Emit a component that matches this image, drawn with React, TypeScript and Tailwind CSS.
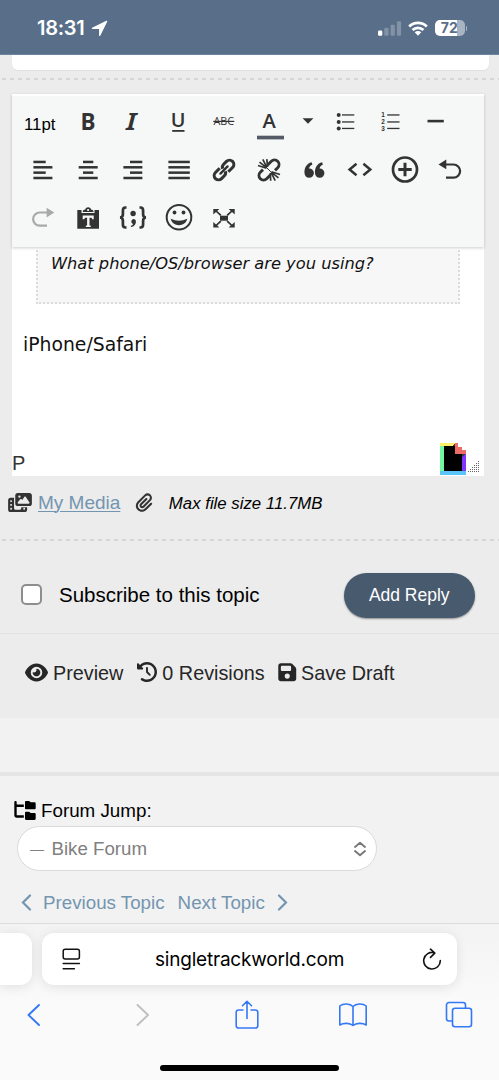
import type { ReactNode } from "react";
import { FaEye, FaFolderTree, FaPaperclip, FaPhotoFilm, FaFloppyDisk, FaClockRotateLeft } from "react-icons/fa6";

// Every toolbar glyph is drawn around 0,0 in a 40x40 box.
function Tool({ children, className = "w-[45.3px]" }: { children: ReactNode; className?: string }) {
    return (
        <button className={`flex h-12 shrink-0 items-center justify-center ${className}`}>
            <svg className="h-10 w-10 shrink-0 overflow-visible" viewBox="-20 -20 40 40" fill="#333" fontFamily="'Open Sans', 'Noto Sans', sans-serif">
                {children}
            </svg>
        </button>
    );
}

function AlignLines({ rows }: { rows: [number, number][] }) {
    return (
        <>
            {rows.map(([x, width], i) => (
                <rect key={i} x={x} y={-9.3 + i * 5.35} width={width} height="2.5" />
            ))}
        </>
    );
}

function Dashes() {
    return <div className="h-[2px] bg-[repeating-linear-gradient(90deg,transparent_0,transparent_2px,#d6d6d6_2px,#d6d6d6_6px,transparent_6px,transparent_8px)]" />;
}

function StatusBar() {
    return (
        <header className="flex h-[55px] shrink-0 items-center border-b border-[#6c86a1] bg-[#596f89] pl-[37px] pr-[32px] pt-[2px] text-white">
            <span className="w-[49px] font-[Inter,sans-serif] text-[20px] font-semibold leading-none tracking-[-0.3px]">18:31</span>
            <svg className="ml-[5px] size-[17px]" viewBox="0 0 17 17" fill="#fff" stroke="#fff" strokeWidth="1.2" strokeLinejoin="round">
                <path d="M15.6 1.4L1.400 8.300H8.700V15.500z" />
            </svg>
            <svg className="ml-auto h-[15px] w-[24px]" viewBox="0 0 24 15" fill="#fff">
                <rect x="0" y="9.5" width="4.3" height="5.3" rx="1.2" />
                <rect x="6.3" y="6.7" width="4.2" height="8.1" rx="1.2" opacity=".25" />
                <rect x="12.6" y="3.7" width="4.2" height="11.1" rx="1.2" opacity=".25" />
                <rect x="18.9" y=".3" width="4.2" height="14.5" rx="1.2" opacity=".25" />
            </svg>
            <svg className="ml-[6px] h-[15px] w-[20px]" viewBox="0 0 20 15" fill="none" stroke="#fff" strokeWidth="2.8">
                <path d="M1.2 5.4a12.6 12.6 0 0 1 17.6 0" />
                <path d="M4.6 9a7.7 7.7 0 0 1 10.8 0" />
                <path d="M6.7 11.3a4.7 4.7 0 0 1 6.6 0L10 14.7z" fill="#fff" stroke="none" />
            </svg>
            <div className="ml-[7px] flex h-[16px] w-[29.5px] items-center justify-center rounded-[5px] bg-[linear-gradient(90deg,#fff_72%,#a9b4c2_72%)] pr-[1px] font-[Inter,sans-serif] text-[14px] font-bold leading-none text-[#596f89]">
                72
            </div>
            <div className="ml-[1px] h-[5px] w-[1.5px] rounded-r-full bg-[#a9b4c2]" />
        </header>
    );
}

function Toolbar() {
    return (
        <div className="h-[153px] border-t-2 border-white bg-[#f6f8f7] pl-[8px] pt-[2px] shadow-[0_1px_3px_rgba(0,0,0,0.2)]">
            <div className="flex">
                <button className="flex h-12 w-[45.3px] shrink-0 items-center pl-[4px] pt-[6px] text-[16.8px] text-black">11pt</button>
                <Tool>
                    <text x="-7.400" y="8.3" fontSize="24" fontWeight="700" textLength="15" lengthAdjust="spacingAndGlyphs">B</text>
                </Tool>
                <Tool>
                    <text x="-7" y="8.3" fontFamily="Noto Sans" fontSize="24" fontWeight="600" fontStyle="italic" textLength="10.5" lengthAdjust="spacingAndGlyphs">I</text>
                </Tool>
                <Tool>
                    <text x="-8.2" y="5.4" fontSize="19.5" fontWeight="600" textLength="14.7" lengthAdjust="spacingAndGlyphs">U</text>
                    <rect x="-6.8" y="8" width="12.3" height="1.8" />
                </Tool>
                <Tool>
                    <text x="-10.5" y="3" fontSize="11" textLength="20.5" lengthAdjust="spacingAndGlyphs">ABC</text>
                    <rect x="-10.7" y="-1.2" width="21" height="1.2" />
                </Tool>
                <Tool>
                    <text x="-6.6" y="5.7" fontSize="20" fontWeight="600" textLength="13.3" lengthAdjust="spacingAndGlyphs">A</text>
                    <rect x="-12" y="13.700" width="27" height="3.700" fill="#555b66" />
                </Tool>
                <Tool className="w-[31.5px]">
                    <path d="M-5.4-3.7H5.4L0 1.7z" />
                </Tool>
                <Tool>
                    {[-7, 0, 6.5].map((y) => (
                        <g key={y}>
                            <circle cx="-7.3" cy={y - 0.1} r="2" />
                            <rect x="-4" y={y - 0.7} width="12.3" height="1.3" />
                        </g>
                    ))}
                </Tool>
                <Tool>
                    {[-7, 0, 6.5].map((y, i) => (
                        <g key={y}>
                            <text x="-9.800" y={y + 2} fontSize="6.400" fontWeight="700" fontFamily="Liberation Sans">{i + 1}</text>
                            <rect x="-3.8" y={y - 0.7} width="12.3" height="1.3" />
                        </g>
                    ))}
                </Tool>
                <Tool>
                    <rect x="-9.5" y="-2.2" width="16.3" height="2.6" />
                </Tool>
            </div>
            <div className="flex">
                <Tool><AlignLines rows={[[-9.6, 12.3], [-9.6, 19], [-9.6, 12.3], [-9.6, 19]]} /></Tool>
                <Tool><AlignLines rows={[[-5, 10.3], [-9.3, 19], [-5, 10.3], [-9.3, 19]]} /></Tool>
                <Tool><AlignLines rows={[[-3, 12.3], [-9.6, 19], [-3, 12.3], [-9.6, 19]]} /></Tool>
                <Tool><AlignLines rows={[[-10.6, 21.4], [-10.6, 21.4], [-10.6, 21.4], [-10.6, 21.4]]} /></Tool>
                <Tool>
                    <g transform="rotate(-45)" fill="none" stroke="#333" strokeWidth="3.1">
                        <path d="M-1.8-4.3h-6a4.3 4.3 0 0 0 0 8.6h4a4.3 4.3 0 0 0 3.9-2.5" />
                        <path d="M1.8 4.3h6a4.3 4.3 0 0 0 0-8.6h-4A4.3 4.3 0 0 0-.1-1.8" />
                        <path d="M-5 0h10" strokeLinecap="round" strokeWidth="2.4" />
                    </g>
                </Tool>
                <Tool>
                    <g fill="none" stroke="#333">
                        <g transform="rotate(-45)" strokeWidth="2.900">
                            <path d="M-4-4.500h-3.800a4.500 4.500 0 0 0 0 9h5.300" />
                            <path d="M4 4.500h3.800a4.500 4.500 0 0 0 0-9H2.500" />
                        </g>
                        <path d="M-2.500-1.800l-8.500-2.700M-2.500-2.300l-7-5.500M-2.200-2.700l-4-8M-1.400-3l-.8-7.800M2.500 1.800l8.500 2.700M2.500 2.300l7 5.500M2.200 2.700l4 8M1.200 3l.5 7.800" strokeWidth="1.700" />
                        <path d="M-3-3L3 3" strokeWidth="1" />
                    </g>
                </Tool>
                <Tool>
                    <path d="M-1.600-5.600c-2.500 1.200-3.200 2.700-3.300 4a4.700 4.700 0 1 1-4.600 4.600C-9.900-2.300-7-6.800-2.400-7.800zM8.900-5.600C6.400-4.400 5.700-2.900 5.600-1.600A4.700 4.700 0 1 1 1 3C.6-2.300 3.500-6.800 8.100-7.800z" />
                </Tool>
                <Tool>
                    <path d="M-3.500-6.200l-6.900 5.700 6.900 5.700M3.400-6.200l6.900 5.700-6.900 5.700" fill="none" stroke="#333" strokeWidth="2.500" />
                </Tool>
                <Tool>
                    <circle cy="-.5" r="12" fill="none" stroke="#333" strokeWidth="2.700" />
                    <path d="M-6.700-2h5.200v-5.200h3V-2h5.200v3h-5.200v5.200h-3V1h-5.200z" />
                </Tool>
                <Tool>
                    <path d="M-11.500-5.500l7.800-5v9.800z" />
                    <path d="M-5-5.500H3.500a6.600 6.600 0 0 1 0 13.200H-4" fill="none" stroke="#333" strokeWidth="2.200" />
                </Tool>
            </div>
            <div className="flex">
                <Tool>
                    <path d="M11.300-5.500l-7.700-4.700v9.700z" fill="#a8aaa9" />
                    <path d="M5-5.500H-3.300a6.600 6.600 0 0 0 0 13.200H4" fill="none" stroke="#a8aaa9" strokeWidth="2.200" />
                </Tool>
                <Tool>
                    <path d="M-10.700-8h4.200v3h13v-3H11V10.700h-21.700z" />
                    <path d="M-5.300-6c0-2 1.500-2.300 2.600-2.500C-2.400-11.600 2.700-11.600 3-8.500c1.100.2 2.600.5 2.600 2.500z" />
                    <circle cx=".1" cy="-8" r="1.100" fill="#f6f8f7" />
                    <path d="M-5.300-2.500H5.700V1.200H4.300L3.500-.2H1.500V7.400l1.300.4V8.900h-5V7.800l1.300-.4V-.2h-2L-3.900 1.200h-1.400z" fill="#f6f8f7" />
                </Tool>
                <Tool>
                    <path d="M-6.500-10.500h-1c-2 0-2.600 1-2.600 3v3.700c0 2-.8 3.100-2.800 3.300 2 .2 2.800 1.300 2.800 3.300v3.700c0 2 .6 3 2.600 3h1M6.500-10.500h1c2 0 2.600 1 2.600 3v3.700c0 2 .8 3.100 2.800 3.300-2 .2-2.800 1.300-2.800 3.300v3.700c0 2-.6 3-2.600 3h-1" fill="none" stroke="#333" strokeWidth="2.700" />
                    <circle cx=".1" cy="-4.500" r="2.700" />
                    <path d="M.2.900a2.700 2.700 0 0 1 2.700 2.800c0 2.900-2 4.900-4.800 5.400l-.4-1.200c1.400-.4 2.200-1 2.300-1.900A2.700 2.700 0 0 1 .2.900z" />
                </Tool>
                <Tool>
                    <circle cy="-.8" r="12.300" fill="none" stroke="#333" strokeWidth="2" />
                    <circle cx="-4.500" cy="-5.500" r="1.900" />
                    <circle cx="4.500" cy="-5.500" r="1.900" />
                    <path d="M-8.300.7Q0 4.700 8.300.7C6.500 9.300-6.500 9.300-8.300.7z" />
                </Tool>
                <Tool>
                    <rect x="-4" y="-2.300" width="8" height="5" />
                    <path d="M-10.700-9h6l-2 2 4.200 3.800-1.300 1.200-4.200-4-2.700 2.500zM10.700-9h-6l2 2-4.200 3.800 1.300 1.200 4.200-4 2.700 2.500zM-10.700 9.500h6l-2-2 4.200-3.800-1.300-1.200-4.200 4-2.700-2.500zM10.700 9.500h-6l2-2-4.200-3.800 1.300-1.200 4.200 4 2.700-2.500z" />
                </Tool>
            </div>
        </div>
    );
}

function Editor() {
    return (
        <div className="ml-[12px] mt-[14px] flex h-[382px] w-[472px] flex-col bg-white">
            <Toolbar />
            <div className="mx-[24px] mt-[3px] h-[54px] border-2 border-t-0 border-dotted border-[#dcdcdc] bg-[#f7f7f7] pl-[13px] pt-[2px] font-['DejaVu_Sans',sans-serif] text-[16.25px] italic leading-[24px]">
                What phone/OS/browser are you using?
            </div>
            <p className="mt-[29px] pl-[11px] font-['DejaVu_Sans',sans-serif] text-[18.8px] leading-[24px]">iPhone/Safari</p>
            <div className="mt-auto flex items-end justify-between pr-[4px]">
                <span className="pb-[1px] text-[20px] leading-[24px] text-[#333]">P</span>
                <div className="flex items-end">
                    <svg className="mb-[1px] h-[32px] w-[26px]" viewBox="0 0 26 32" shapeRendering="crispEdges">
                        <path d="M0 0h26v32H0z" fill="#000" />
                        <path d="M0 3h4v25H0z" fill="#71f79f" />
                        <path d="M0 0h15v3H0z" fill="#fff06a" />
                        <path d="M22 11h4v17h-4z" fill="#8134ff" />
                        <path d="M0 28h26v4H0z" fill="#5bc5fb" />
                        <path d="M18 0h8v11h-8z" fill="#fff" />
                        <path d="M15 0h3v4h4v3h4v4H15z" fill="#ee6b67" />
                        <path d="M12 3l3-3v3zM22 11h4l-4 3z" fill="#403c43" />
                    </svg>
                    <svg className="mb-[3px] ml-[1px] h-[13px] w-[13px]" viewBox="0 0 13 13" fill="#666" shapeRendering="crispEdges">
                        {[1, 2, 3, 4, 5, 6].map((n) =>
                            Array.from({ length: n }, (_, i) => (
                                <rect key={`${n}-${i}`} x={n * 2 - 1} y={11 - i * 2} width="1" height="1" />
                            ))
                        )}
                    </svg>
                </div>
            </div>
        </div>
    );
}

function ReplyForm() {
    return (
        <section className="h-[663px] shrink-0 bg-[#ececec]">
            <div className="ml-[12px] mr-[10px] h-[15px] rounded-b-[6px] bg-white shadow-[0_1px_1px_rgba(0,0,0,0.05)]" />
            <div className="pt-[8px]">
                <Dashes />
            </div>
            <Editor />
            <div className="flex h-[63px] items-center pb-[9px] pl-[8px] text-[#333]">
                <FaPhotoFilm className="h-[19px] w-[24px] -translate-y-px" />
                <a className="-mt-[2px] ml-[6px] text-[19px] leading-none text-[#7495b0] underline decoration-1 underline-offset-2">My Media</a>
                <FaPaperclip className="-mt-[1px] ml-[15px] h-[19px] w-[18px]" />
                <em className="ml-[15.5px] mt-[2px] text-[16.8px] leading-none text-black">Max file size 11.7MB</em>
            </div>
            <Dashes />
            <div className="flex h-[93px] items-center border-b border-[#e1e1e1] pl-[21px] pr-[24px] pt-[17px]">
                <span className="-mt-[3px] size-[21px] rounded-[5px] border-2 border-[#8e8e8e] bg-white" />
                <span className="ml-[17px] text-[20.5px] leading-none text-black">Subscribe to this topic</span>
                <button className="ml-auto h-[45px] w-[131.500px] rounded-full bg-[#485a6e] text-[17.5px] text-white shadow-[0_1px_2px_rgba(0,0,0,0.4)]">
                    Add Reply
                </button>
            </div>
            <div className="flex h-[84px] items-center pb-[5px] pl-[25px] text-[19.8px] leading-none text-[#262626]">
                <FaEye className="-mt-[3px] size-[23px]" />
                <span className="ml-[5px]">Preview</span>
                <FaClockRotateLeft className="-mt-[3px] ml-[14px] size-[20px]" />
                <span className="ml-[5px]">0 Revisions</span>
                <FaFloppyDisk className="-mt-[3px] ml-[12px] size-[20.5px]" />
                <span className="ml-[4px]">Save Draft</span>
            </div>
        </section>
    );
}

function ForumJump() {
    return (
        <section className="h-[205px] shrink-0 bg-[#f2f2f2] pt-[54px]">
            <div className="h-[4px] bg-[#e5e5e5]" />
            <div className="flex h-[50px] items-center pl-[14px] pt-[21px] text-[18.8px] leading-none text-black">
                <FaFolderTree className="-mt-[2px] h-[19px] w-[22px]" />
                <span className="ml-[5px]">Forum Jump:</span>
            </div>
            <div className="ml-[17px] flex h-[45px] w-[360px] items-center rounded-full border border-[#dadada] bg-white pl-[12px] pr-[9px] pt-[2px] text-[18.7px] text-[#808080]">
                <span className="text-[14px]">—</span>
                <span className="ml-[7.500px]">Bike Forum</span>
                <svg className="-mt-[2px] ml-auto h-[16px] w-[14px]" viewBox="0 0 14 16" fill="none" stroke="#777" strokeWidth="1.900" strokeLinecap="round" strokeLinejoin="round">
                    <path d="M2 6l5-4.200L12 6M2 10l5 4.200 5-4.200" />
                </svg>
            </div>
            <div className="flex h-[52px] items-center pl-[21px] pt-[12px] text-[18.750px] leading-none text-[#7495b0]">
                <svg className="-mt-[2px] h-[17px] w-[11px]" viewBox="0 0 11 17" fill="none" stroke="#7495b0" strokeWidth="2.200" strokeLinecap="round">
                    <path d="M9 1.500l-7 7 7 7" />
                </svg>
                <span className="ml-[11px]">Previous Topic</span>
                <span className="ml-[13px]">Next Topic</span>
                <svg className="-mt-[2px] ml-[12px] h-[17px] w-[11px]" viewBox="0 0 11 17" fill="none" stroke="#7495b0" strokeWidth="2.200" strokeLinecap="round">
                    <path d="M2 1.500l7 7-7 7" />
                </svg>
            </div>
        </section>
    );
}

function BrowserBar() {
    return (
        <footer className="h-[157px] shrink-0 border-t border-[#dcdcdc] bg-[#fafafa] bg-linear-to-b from-[#f3f3f3] to-[#fafafa] to-50% pt-[9px]">
            <div className="flex h-[52px]">
                <div className="w-[32px] rounded-r-[12px] bg-white shadow-[0_2px_12px_rgba(0,0,0,0.1)]" />
                <div className="ml-[10px] flex w-[415px] items-center rounded-[12px] bg-white pl-[20px] pr-[15px] text-black shadow-[0_2px_12px_rgba(0,0,0,0.1)]">
                    <svg className="h-[22px] w-[19px]" viewBox="0 0 19 22" fill="none" stroke="#111" strokeWidth="1.500" strokeLinecap="round">
                        <rect x="1.200" y="1.200" width="16.200" height="9.800" rx="2" />
                        <path d="M1.200 15.500h16.200M1.200 20.700h11.200" />
                    </svg>
                    <span className="ml-auto mr-auto pr-[4px] pt-[2px] font-[Inter,sans-serif] text-[19px] tracking-[-0.2px]">singletrackworld.com</span>
                    <svg className="h-[22px] w-[20px]" viewBox="0 0 20 22" fill="none" stroke="#111" strokeWidth="1.600" strokeLinecap="round" strokeLinejoin="round">
                        <path d="M12.500 4.800A8.300 8.300 0 1 0 18.300 12.500M8.500 1.200l4.300 3.900-4.300 4.300" />
                    </svg>
                </div>
            </div>
            <nav className="mt-[14px] flex h-[32px] items-center pl-[27px] pr-[26px]">
                <svg className="h-[24px] w-[14px]" viewBox="0 0 14 24" fill="none" stroke="#3478f6" strokeWidth="1.900" strokeLinecap="round" strokeLinejoin="round">
                    <path d="M12 2L1.500 12 12 22" />
                </svg>
                <svg className="ml-[94px] h-[24px] w-[14px]" viewBox="0 0 14 24" fill="none" stroke="#bfbfc1" strokeWidth="1.900" strokeLinecap="round" strokeLinejoin="round">
                    <path d="M2.500 2L13 12 2.500 22" />
                </svg>
                <svg className="ml-[86px] h-[30px] w-[24px]" viewBox="0 0 24 30" fill="none" stroke="#3478f6" strokeWidth="1.600" strokeLinecap="round" strokeLinejoin="round">
                    <path d="M8 10H3.500a2.300 2.300 0 0 0-2.300 2.300v13.400A2.300 2.300 0 0 0 3.500 28h17a2.300 2.300 0 0 0 2.300-2.300V12.300a2.300 2.300 0 0 0-2.300-2.300H16M12 18.500V1.500M7.500 5.800L12 1.300l4.500 4.500" />
                </svg>
                <svg className="ml-[79px] h-[24px] w-[30px]" viewBox="0 0 30 24" fill="none" stroke="#3478f6" strokeWidth="1.600" strokeLinejoin="round">
                    <path d="M15 3.500C12 .5 5.500 0 1.800 3v19c3.700-2.200 10-2.200 13.200.5 3.200-2.700 9.500-2.700 13.200-.5V3C24.500 0 18 .5 15 3.500zM15 3.500v19" />
                </svg>
                <svg className="ml-auto h-[28px] w-[28px]" viewBox="0 0 28 28" fill="none" stroke="#3478f6" strokeWidth="1.600" strokeLinejoin="round">
                    <path d="M7 20H4a2.500 2.500 0 0 1-2.500-2.500V4A2.500 2.500 0 0 1 4 1.500h14A2.500 2.500 0 0 1 20.500 4v3" />
                    <rect x="7.500" y="7.200" width="19" height="18.500" rx="2.500" />
                </svg>
            </nav>
            <div className="mx-auto mt-[34px] h-[6px] w-[179px] rounded-full bg-black" />
        </footer>
    );
}

export default function App() {
    return (
        <div className="flex h-[1080px] w-[499px] flex-col overflow-hidden whitespace-nowrap bg-[#f2f2f2] font-['Liberation_Sans',sans-serif] text-[#111]">
            <StatusBar />
            <ReplyForm />
            <ForumJump />
            <BrowserBar />
        </div>
    );
}
